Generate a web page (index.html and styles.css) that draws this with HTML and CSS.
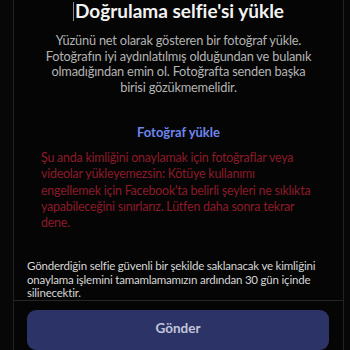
FILE: index.html
```html
<!DOCTYPE html>
<html lang="tr">
<head>
<meta charset="utf-8">
<link rel="stylesheet" href="styles.css">
</head>
<body>
<div class="panel">
  <div class="body">
    <h1 class="title"><span class="caret"></span>Doğrulama selfie'si yükle</h1>
    <p class="intro">Yüzünü net olarak gösteren bir fotoğraf yükle.<br>Fotoğrafın iyi aydınlatılmış olduğundan ve bulanık<br>olmadığından emin ol. Fotoğrafta senden başka<br>birisi gözükmemelidir.</p>
    <div class="upload">Fotoğraf yükle</div>
    <p class="error">Şu anda kimliğini onaylamak için fotoğraflar veya<br>videolar yükleyemezsin: Kötüye kullanımı<br>engellemek için Facebook'ta belirli şeyleri ne sıklıkta<br>yapabileceğini sınırlarız. Lütfen daha sonra tekrar<br>dene.</p>
    <p class="note">Gönderdiğin selfie güvenli bir şekilde saklanacak ve kimliğini<br>onaylama işlemini tamamlamamızın ardından 30 gün içinde<br>silinecektir.</p>
  </div>
  <div class="footer">
    <button class="submit" type="button">Gönder</button>
  </div>
</div>
</body>
</html>
```
FILE: styles.css
```css
html, body {
  margin: 0;
  padding: 0;
  background: #070707;
  height: 350px;
  overflow: hidden;
  font-family: "Lato", "Open Sans", sans-serif;
}
.panel {
  margin: 0 6px 0 13px;
  border-left: 1px solid #222;
  border-right: 1px solid #222;
  height: 350px;
  background: #050505;
  display: flex;
  flex-direction: column;
}
.body {
  height: 309px;
  border-bottom: 1px solid #262626;
  display: flex;
  flex-direction: column;
}
.title {
  margin: 0;
  font-size: 19px;
  line-height: 22px;
  font-weight: 700;
  color: #f2f2f2;
  text-align: center;
}
.caret {
  display: inline-block;
  width: 1px;
  height: 19px;
  background: #8a8a8a;
  vertical-align: -3px;
  margin-right: 1px;
}
.intro {
  margin: 11px 0 0;
  padding: 0;
  font-size: 12.8px;
  line-height: 15.5px;
  color: #b3b3b3;
  text-align: center;
  white-space: nowrap;
  letter-spacing: -0.2px;
}
.upload {
  margin-top: 29px;
  text-align: center;
  font-size: 13px;
  font-weight: 700;
  color: #6f86f0;
  line-height: 16px;
}
.error {
  margin: 10px 0 0;
  padding: 0 0 0 27px;
  font-size: 12.4px;
  line-height: 16.3px;
  color: #8d1a29;
  white-space: nowrap;
  letter-spacing: -0.2px;
}
.note {
  margin: 28px 0 0;
  padding: 0 13px;
  font-size: 11.5px;
  line-height: 13.5px;
  color: #d6d6d6;
  white-space: nowrap;
  letter-spacing: -0.2px;
}
.footer {
  padding: 9px 14px 0 13px;
}
.submit {
  display: block;
  width: 100%;
  height: 40px;
  border: 0;
  border-radius: 9px;
  background: #2c3366;
  color: #c3c6da;
  font-family: inherit;
  font-size: 13.5px;
  font-weight: 700;
  padding: 0 0 4px;
}
```
